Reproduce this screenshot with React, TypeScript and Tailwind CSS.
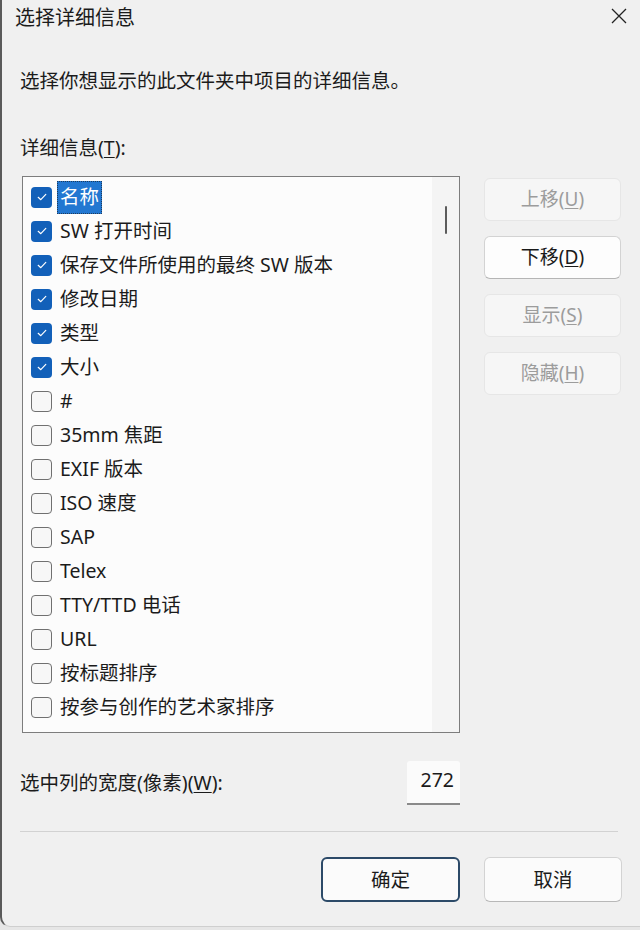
import React from 'react';

type Item = { label: string; checked: boolean; selected?: boolean };

const items: Item[] = [
    { label: '名称', checked: true, selected: true },
    { label: 'SW 打开时间', checked: true },
    { label: '保存文件所使用的最终 SW 版本', checked: true },
    { label: '修改日期', checked: true },
    { label: '类型', checked: true },
    { label: '大小', checked: true },
    { label: '#', checked: false },
    { label: '35mm 焦距', checked: false },
    { label: 'EXIF 版本', checked: false },
    { label: 'ISO 速度', checked: false },
    { label: 'SAP', checked: false },
    { label: 'Telex', checked: false },
    { label: 'TTY/TTD 电话', checked: false },
    { label: 'URL', checked: false },
    { label: '按标题排序', checked: false },
    { label: '按参与创作的艺术家排序', checked: false },
];

function Check({ checked }: { checked: boolean }) {
    if (checked) {
        return (
            <span className="w-[21px] h-[21px] rounded-[4px] bg-[#1260b9] flex items-center justify-center shrink-0">
                <svg width="12" height="12" viewBox="0 0 12 12" fill="none">
                    <path d="M2.2 6.3 L4.8 8.7 L9.8 3.4" stroke="#fff" strokeWidth="1.2" strokeLinecap="round" strokeLinejoin="round" />
                </svg>
            </span>
        );
    }
    return <span className="w-[21px] h-[21px] rounded-[4px] border border-[#707070] bg-[#f7f7f7] shrink-0" />;
}

function SideButton({ text, hotkey, enabled }: { text: string; hotkey: string; enabled?: boolean }) {
    return (
        <button
            className={
                enabled
                    ? 'w-[137px] h-[43px] rounded-[6px] bg-[#fdfdfd] border border-[#d3d3d3] border-b-[#b5b5b5] text-[19px] text-[#1a1a1a]'
                    : 'w-[137px] h-[43px] rounded-[6px] bg-[#f6f6f6] border border-[#e6e6e6] text-[19px] text-[#9c9c9c]'
            }
        >
            {text}(<span className="underline underline-offset-2">{hotkey}</span>)
        </button>
    );
}

export default function App() {
    return (
        <div className="w-[640px] h-[930px] bg-[#e6e6e6] font-['Noto_Sans','Noto_Sans_CJK_SC',sans-serif] text-[#1b1b1b]">
            <div className="h-[927px] bg-[#f0f0f0] border-l-2 border-l-[#5a5a5a] border-b border-b-[#cfcfcf] rounded-bl-[10px] flex flex-col">
                {/* title bar */}
                <div className="flex items-start justify-between pl-[13px] pr-[13px] pt-[4px] h-[40px]">
                    <span className="text-[20px] leading-[28px]">选择详细信息</span>
                    <svg width="16" height="16" viewBox="0 0 16 16" className="mt-[4px]">
                        <path d="M1 1 L15 15 M15 1 L1 15" stroke="#222" strokeWidth="1.3" />
                    </svg>
                </div>

                <p className="pl-[18px] mt-[28px] text-[19.5px] leading-[26px]">选择你想显示的此文件夹中项目的详细信息。</p>

                <p className="pl-[18px] mt-[41px] text-[19.5px] leading-[26px]">
                    详细信息(<span className="underline underline-offset-2">T</span>):
                </p>

                <div className="flex mt-[15px] pl-[20px]">
                    {/* list */}
                    <div className="w-[438px] h-[557px] border border-[#7d7d7d] bg-[#fcfcfc] flex">
                        <div className="flex-1 pt-[3px] flex flex-col">
                            {items.map((it) => (
                                <div key={it.label} className="h-[34px] flex items-center pl-[8px] shrink-0">
                                    <Check checked={it.checked} />
                                    <span
                                        className={
                                            it.selected
                                                ? 'ml-[5px] px-[3px] h-[33px] flex items-center bg-[#2277d1] text-white outline-1 outline-dotted outline-[#1d3b5c] -outline-offset-1 text-[19.5px]'
                                                : 'ml-[5px] px-[3px] text-[19.5px] leading-[26px]'
                                        }
                                    >
                                        {it.label}
                                    </span>
                                </div>
                            ))}
                        </div>
                        <div className="w-[27px] bg-[#f4f4f4] flex justify-center pt-[29px]">
                            <span className="w-[2px] h-[28px] bg-[#5c5c5c] rounded-full" />
                        </div>
                    </div>

                    {/* side buttons */}
                    <div className="ml-[24px] mt-[2px] flex flex-col gap-[15px]">
                        <SideButton text="上移" hotkey="U" />
                        <SideButton text="下移" hotkey="D" enabled />
                        <SideButton text="显示" hotkey="S" />
                        <SideButton text="隐藏" hotkey="H" />
                    </div>
                </div>

                {/* width row */}
                <div className="flex items-center pl-[18px] mt-[28px] w-[458px]">
                    <span className="text-[19.5px] leading-[26px] flex-1">
                        选中列的宽度(像素)(<span className="underline underline-offset-2">W</span>):
                    </span>
                    <div className="w-[53px] h-[44px] bg-[#fbfbfb] border-b-2 border-b-[#8a8a8a] rounded-t-[3px] flex items-start justify-end pr-[6px] pt-[6px] text-[19.5px] leading-[26px]">
                        272
                    </div>
                </div>

                <div className="mx-[18px] mt-[26px] h-px bg-[#d2d2d2] w-[598px]" />

                {/* footer */}
                <div className="flex mt-[25px] pl-[319px] gap-[24px]">
                    <button className="w-[139px] h-[45px] rounded-[6px] border-2 border-[#2c4a68] bg-[#fbfbfb] text-[19.5px]">确定</button>
                    <button className="w-[138px] h-[45px] rounded-[6px] border border-[#d3d3d3] border-b-[#b8b8b8] bg-[#fbfbfb] text-[19.5px]">取消</button>
                </div>
            </div>
        </div>
    );
}
